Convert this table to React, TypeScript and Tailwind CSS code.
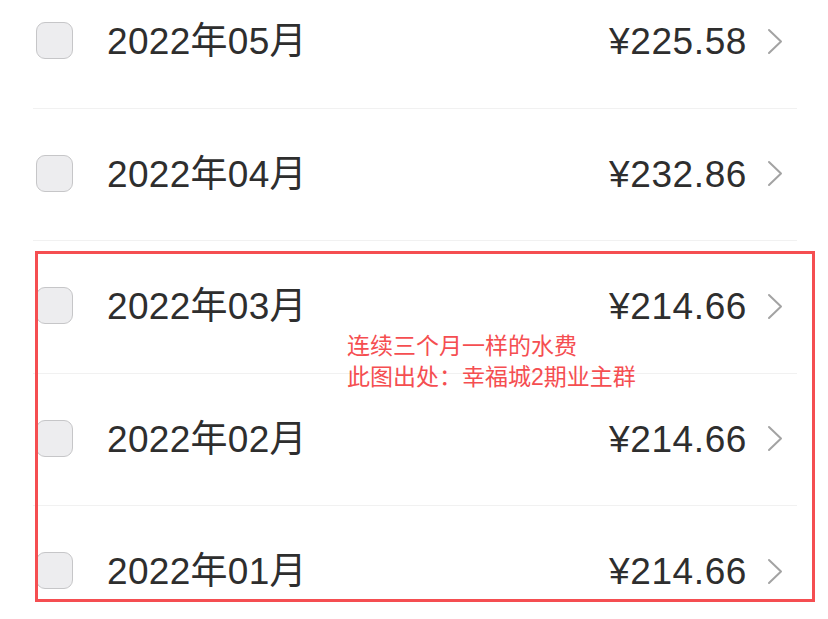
const bills = [
  { month: '2022年05月', amount: '¥225.58' },
  { month: '2022年04月', amount: '¥232.86' },
  { month: '2022年03月', amount: '¥214.66' },
  { month: '2022年02月', amount: '¥214.66' },
  { month: '2022年01月', amount: '¥214.66' },
];

const Chevron = () => (
  <svg width="16" height="27" viewBox="0 0 16 27" fill="none">
    <path d="M2 2 L14 13.5 L2 25" stroke="#a3a3a3" strokeWidth="2" strokeLinecap="round" strokeLinejoin="round" />
  </svg>
);

const BillRow = ({ month, amount }: { month: string; amount: string }) => (
  <div className="flex items-center h-[132.5px] border-b border-[#f1f1f1] pl-[3px] pr-[14px]">
    <div className="w-[37px] h-[37px] rounded-[9px] bg-[#ededef] border-[1.5px] border-[#c6c6c8] -mt-[2px]" />
    <div className="ml-[34px] text-[37px] text-[#2e2e2e] tracking-[0.3px]">{month}</div>
    <div className="ml-auto text-[37px] text-[#2e2e2e] tracking-[0.6px]">{amount}</div>
    <div className="ml-[20px] -mt-[1px]">
      <Chevron />
    </div>
  </div>
);

export default function App() {
  return (
    <div
      className="relative w-[828px] h-[619px] overflow-hidden bg-white"
      style={{ fontFamily: '"Liberation Sans", "Noto Sans CJK SC", sans-serif' }}
    >
      <div className="-mt-[24px] ml-[33px] w-[764px]">
        {bills.map((b) => (
          <BillRow key={b.month} month={b.month} amount={b.amount} />
        ))}
      </div>

      <div className="absolute left-[35px] top-[251px] w-[780px] h-[351px] border-[3.5px] border-[#f54e51]">
        <div className="absolute left-[309px] top-[77px] text-[23px] leading-[31px] text-[#f54e51]">
          <p>连续三个月一样的水费</p>
          <p>此图出处：幸福城2期业主群</p>
        </div>
      </div>
    </div>
  );
}
